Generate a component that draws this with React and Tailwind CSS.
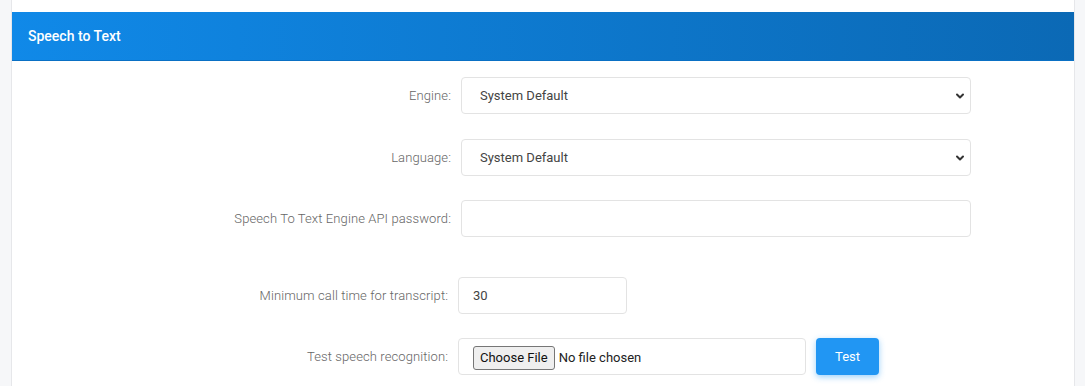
import { ChevronDown } from 'lucide-react';

const labelClass = 'text-[13px] font-light text-[#666] text-right tracking-[0.1px]';
const boxClass = 'h-[37px] border border-[#e3e3e3] rounded-[4px] bg-white text-[13px] text-[#444]';

const SelectRow = ({ label, value }) => (
  <div className="flex items-center">
    <div className={`w-[439px] ${labelClass}`}>{label}</div>
    <div className="ml-[10px] relative w-[510px]">
      <select className={`${boxClass} w-full appearance-none pl-[18px] pr-8 outline-none`} defaultValue={value}>
        <option>{value}</option>
      </select>
      <ChevronDown className="absolute right-[5px] top-1/2 -translate-y-1/2 h-[12px] w-[12px] text-[#333] pointer-events-none" strokeWidth={4} />
    </div>
  </div>
);

const App = () => {
  return (
    <div className="flex h-[386px] w-full overflow-hidden bg-[#f6f7f9]" style={{ fontFamily: 'Roboto, "Noto Sans", sans-serif' }}>
      <div className="w-[11px] shrink-0" />
      <div className="w-[1064px] shrink-0 bg-white border-x border-[#e6e7ea] pt-[12px]">
        <div className="h-[49px] flex items-center px-4 bg-gradient-to-r from-[#1089e8] to-[#0b69b5] border-b border-[#0a70c4]">
          <h3 className="text-[14px] font-medium text-white">Speech to Text</h3>
        </div>

        <div className="pt-[16px]">
          <SelectRow label="Engine:" value="System Default" />
          <div className="mt-[25px]">
            <SelectRow label="Language:" value="System Default" />
          </div>

          <div className="mt-[24px] flex items-center">
            <div className={`w-[439px] ${labelClass}`}>Speech To Text Engine API password:</div>
            <input type="password" className={`${boxClass} ml-[10px] w-[510px] px-[15px] outline-none`} />
          </div>

          <div className="mt-[40px] flex items-center">
            <div className={`w-[436px] ${labelClass}`}>Minimum call time for transcript:</div>
            <input type="text" defaultValue="30" className={`${boxClass} ml-[10px] w-[169px] px-[14px] outline-none`} />
          </div>

          <div className="mt-[24px] flex items-center">
            <div className={`w-[436px] ${labelClass}`}>Test speech recognition:</div>
            <div className={`${boxClass} ml-[10px] w-[348px] flex items-center pl-[14px] pt-[3px]`}>
              <input
                type="file"
                className="text-[13px] text-[#222] file:mr-[4px] file:h-[24px] file:px-[6px] file:bg-[#efefef] file:border file:border-[#767676] file:rounded-[3px] file:text-[#111] file:text-[13px]"
              />
            </div>
            <button className="ml-[10px] h-[37px] w-[63px] rounded-[4px] bg-[#2196f3] text-white text-[13px] shadow-[0_2px_6px_rgba(33,150,243,0.45)]">
              Test
            </button>
          </div>
        </div>
      </div>
      <div className="flex-1" />
    </div>
  );
};

export default App;
